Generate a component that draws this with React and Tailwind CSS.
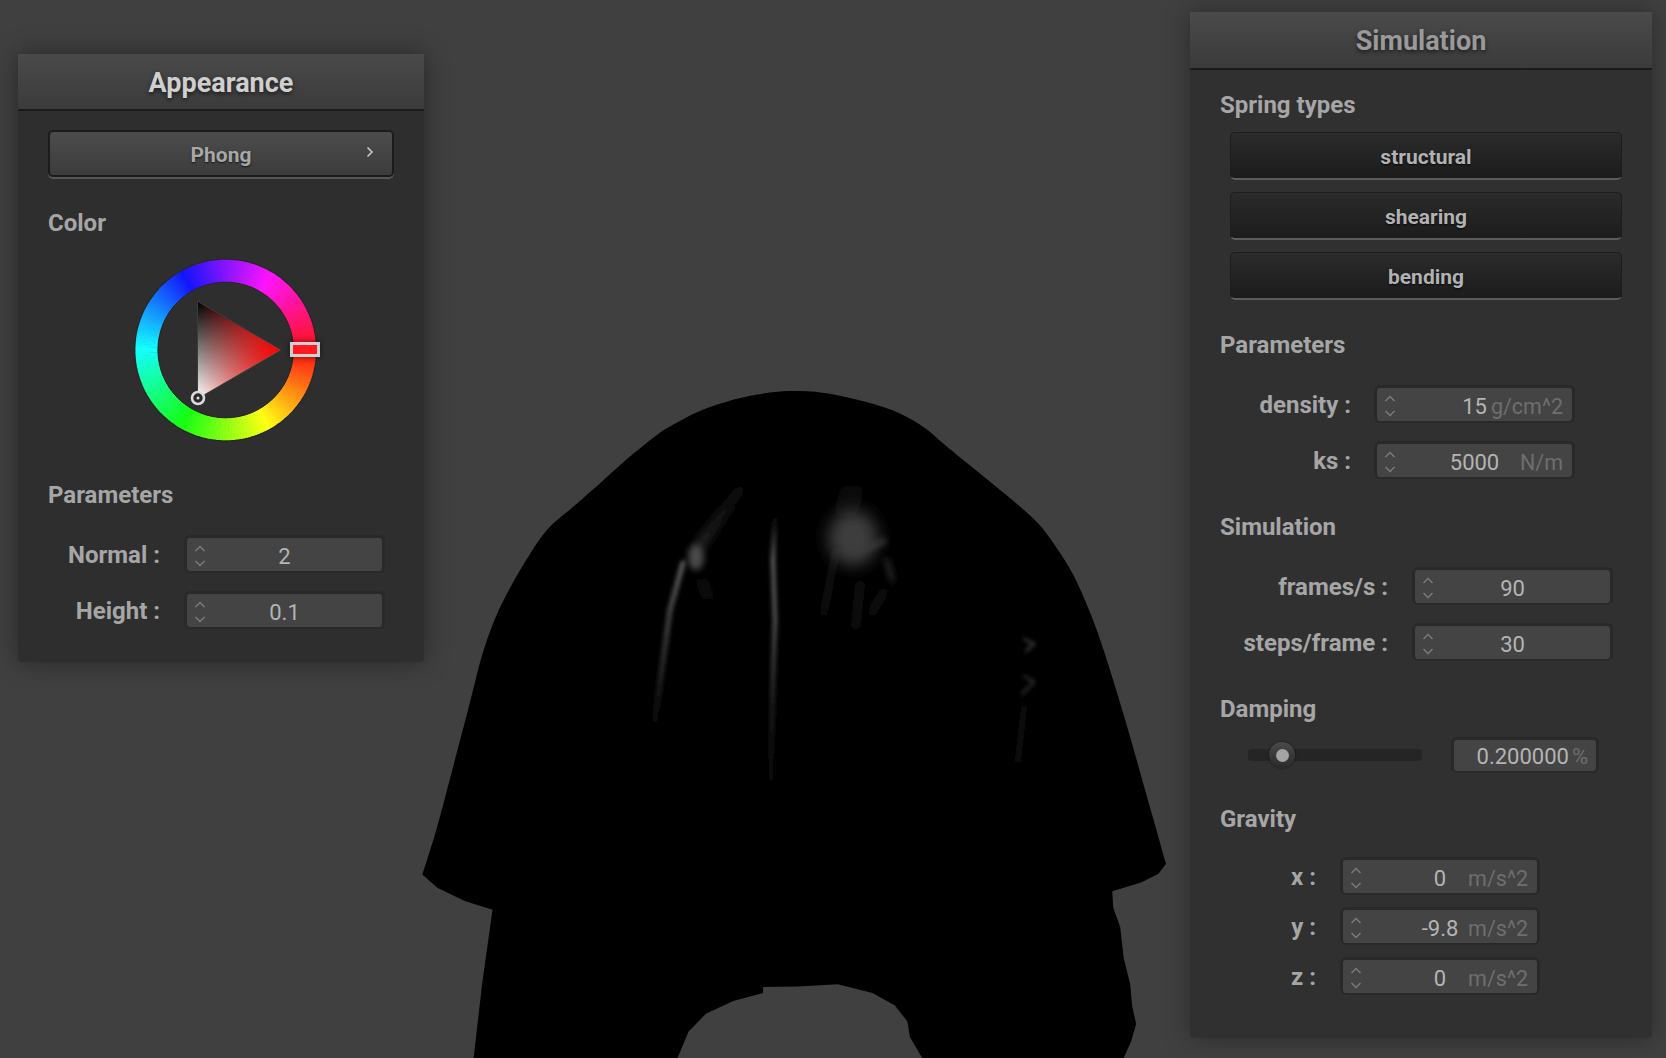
import React from 'react';

const hues = Array.from({ length: 180 }, (_, i) => i * 2);

const polar = (cx, cy, r, deg) => {
  const a = (deg * Math.PI) / 180;
  return `${(cx + r * Math.cos(a)).toFixed(2)} ${(cy + r * Math.sin(a)).toFixed(2)}`;
};

// catmull-rom through the points, used for the cloth outline
const smooth = (pts) => {
  let d = `M${pts[0][0]} ${pts[0][1]}`;
  for (let i = 0; i < pts.length - 1; i++) {
    const p0 = pts[i - 1] || pts[i];
    const p1 = pts[i];
    const p2 = pts[i + 1];
    const p3 = pts[i + 2] || p2;
    d += `C${p1[0] + (p2[0] - p0[0]) / 6} ${p1[1] + (p2[1] - p0[1]) / 6} ${p2[0] - (p3[0] - p1[0]) / 6} ${p2[1] - (p3[1] - p1[1]) / 6} ${p2[0]} ${p2[1]}`;
  }
  return d;
};

const dome = [
  [45, 1150], [75, 1040], [110, 890], [140, 760], [165, 650], [190, 570], [215, 510], [250, 440], [295, 365],
  [350, 310], [410, 250], [470, 190], [520, 145], [560, 118], [610, 90], [680, 65], [740, 52], [790, 48],
  [850, 52], [920, 68], [990, 92], [1050, 128], [1090, 165], [1130, 203], [1190, 258], [1240, 305], [1285, 352],
  [1320, 405], [1355, 470], [1390, 560], [1415, 640], [1440, 730], [1465, 825], [1490, 925], [1515, 1025], [1540, 1125],
];

const hem =
  'L1525 1148L1490 1168L1432 1188L1434 1225L1448 1270L1455 1340L1468 1400L1472 1450L1480 1490L1470 1530L1455 1568L1050 1568L1025 1520L1020 1485L995 1448L950 1420L880 1400L800 1405L730 1406L730 1420L670 1438L615 1467L580 1508L558 1568L148 1568L165 1400L186 1230L130 1210L75 1180Z';

// hue wheel + saturation triangle
const ColorWheel = () => (
  <svg width="200" height="200" viewBox="126 250 200 200" className="block overflow-visible">
    <defs>
      <linearGradient id="triV" gradientUnits="userSpaceOnUse" x1="198" y1="302" x2="198" y2="398">
        <stop offset="0" stopColor="#000" />
        <stop offset="1" stopColor="#fff" />
      </linearGradient>
      <linearGradient id="triH" gradientUnits="userSpaceOnUse" x1="198" y1="350" x2="280" y2="350">
        <stop offset="0" stopColor="#ff0000" stopOpacity="0" />
        <stop offset="1" stopColor="#ff0000" stopOpacity="1" />
      </linearGradient>
      <filter id="handleBlur" filterUnits="userSpaceOnUse" x="270" y="320" width="70" height="60">
        <feGaussianBlur stdDeviation="3" />
      </filter>
    </defs>
    <circle cx="225.7" cy="350" r="91.500" fill="#262626" />
    {hues.map((h) => (
      <path
        key={h}
        d={`M${polar(225.7, 350, 79, h - 0.2)}A79 79 0 0 1 ${polar(225.7, 350, 79, h + 2.2)}`}
        stroke={`hsl(${h} 100% 54%)`}
        strokeWidth="22.500"
        fill="none"
      />
    ))}
    <circle cx="225.7" cy="350" r="67.800" fill="#2e2e2e" stroke="#262626" strokeWidth="1" />
    <polygon points="198,302 280,350 198,398" fill="none" stroke="#3c3c3c" strokeWidth="2" />
    <polygon points="198,302 280,350 198,398" fill="url(#triV)" />
    <polygon points="198,302 280,350 198,398" fill="url(#triH)" />
    <rect x="290" y="342" width="30" height="15" fill="#000" opacity="0.55" filter="url(#handleBlur)" />
    <rect x="291.500" y="343.500" width="27" height="12" fill="#ff1a22" stroke="#d0d0d0" strokeWidth="3" />
    <circle cx="198" cy="398" r="6" fill="#2a2a2a" stroke="#dcdcdc" strokeWidth="2.600" />
    <circle cx="198" cy="398" r="1.500" fill="#ddd" />
  </svg>
);

const Spinner = () => (
  <svg width="12" height="22" viewBox="0 0 12 22" fill="none" stroke="#7c7c7c" strokeWidth="1.400" className="block">
    <path d="M1.500 6 6 1.500 10.500 6" />
    <path d="M1.500 16 6 20.500 10.500 16" />
  </svg>
);

const Heading = ({ className = '', children }) => (
  <div className={`h-8 text-[24px] leading-8 font-bold text-[#a6a6a6] ${className}`}>{children}</div>
);

const NumberBox = ({ value, unit, className = '' }) => (
  <div className={`grid h-[38px] grid-cols-[1fr_auto_1fr] items-center rounded-[6px] border-[3px] border-b-2 border-[#292929] bg-[#444444] text-[22px] ${className}`}>
    <div className="pl-[7px]">
      <Spinner />
    </div>
    <div className="pt-[2px] text-[#b4b4b4]">{value}</div>
    <div className="pt-[3px] pr-[9px] text-right text-[21.5px] text-[#6e6e6e]">{unit}</div>
  </div>
);

const Label = ({ className = '', children }) => (
  <div className={`pt-[2px] text-right text-[24px] leading-8 font-bold text-[#a6a6a6] ${className}`}>{children}</div>
);

const SpringButton = ({ children }) => (
  <div className="flex h-12 w-[392px] items-center justify-center rounded-[5px] border border-b-2 border-[#1d1d1d] border-b-[#5c5c5c] bg-gradient-to-b from-[#2b2b2b] to-[#1c1c1c] pt-[4px] text-[21px] font-bold text-[#b2b2b2] [text-shadow:0_1px_2px_rgba(0,0,0,0.8)]">
    {children}
  </div>
);

const PanelHeader = ({ title, className = '' }) => (
  <div className={`flex items-center justify-center border-b-2 border-[#1b1b1b] bg-gradient-to-b from-[#4a4a4a] to-[#3b3b3b] pt-[3px] text-[27px] font-bold [text-shadow:0_2px_4px_rgba(0,0,0,0.6)] ${className}`}>
    {title}
  </div>
);

// the rendered cloth, in screen pixels (outline traced on a 1568 grid)
const Cloth = () => (
  <svg width="780" height="688" viewBox="400 370 780 688" className="absolute top-[370px] left-[400px]">
    <defs>
      <filter id="b2" filterUnits="userSpaceOnUse" x="400" y="370" width="780" height="688"><feGaussianBlur stdDeviation="2" /></filter>
      <filter id="b3" filterUnits="userSpaceOnUse" x="400" y="370" width="780" height="688"><feGaussianBlur stdDeviation="3" /></filter>
      <filter id="b5" filterUnits="userSpaceOnUse" x="400" y="370" width="780" height="688"><feGaussianBlur stdDeviation="5" /></filter>
      <filter id="b8" filterUnits="userSpaceOnUse" x="400" y="370" width="780" height="688"><feGaussianBlur stdDeviation="8" /></filter>
      <linearGradient id="fadeL" gradientUnits="userSpaceOnUse" x1="0" y1="560" x2="0" y2="740">
        <stop offset="0" stopColor="#606060" />
        <stop offset="0.4" stopColor="#3c3c3c" />
        <stop offset="1" stopColor="#000" />
      </linearGradient>
      <linearGradient id="fadeC" gradientUnits="userSpaceOnUse" x1="0" y1="515" x2="0" y2="810">
        <stop offset="0" stopColor="#000" />
        <stop offset="0.15" stopColor="#646464" />
        <stop offset="0.35" stopColor="#5a5a5a" />
        <stop offset="0.65" stopColor="#222" />
        <stop offset="1" stopColor="#000" />
      </linearGradient>
      <linearGradient id="fadeU" gradientUnits="userSpaceOnUse" x1="0" y1="475" x2="0" y2="555">
        <stop offset="0" stopColor="#000" />
        <stop offset="1" stopColor="#2c2c2c" />
      </linearGradient>
    </defs>
    <g transform="translate(400 370) scale(0.4974 0.4388)">
      <path fill="#000" d={`${smooth(dome)}${hem}`} />
    </g>
    <g fill="none" strokeLinecap="round">
      <path d="M683 563L670 610L655 720" stroke="url(#fadeL)" strokeWidth="5" filter="url(#b2)" />
      <path d="M700 545L727 507L752 473" stroke="url(#fadeU)" strokeWidth="10" filter="url(#b5)" />
      <path d="M775 515L773 560L775 620L773 680L770 810" stroke="url(#fadeC)" strokeWidth="4" filter="url(#b2)" />
      <path d="M702 582L708 596" stroke="#141414" strokeWidth="7" filter="url(#b5)" />
      <path d="M858 552L884 541" stroke="#3c3c3c" strokeWidth="5" filter="url(#b3)" />
      <path d="M852 492L846 510" stroke="#121212" strokeWidth="14" filter="url(#b8)" />
      <path d="M836 550L824 612" stroke="#0a0a0a" strokeWidth="9" filter="url(#b5)" />
      <path d="M887 560L892 580" stroke="#262626" strokeWidth="5" filter="url(#b3)" />
      <path d="M860 585L856 625" stroke="#0e0e0e" strokeWidth="10" filter="url(#b5)" />
      <path d="M884 592L872 612" stroke="#0a0a0a" strokeWidth="10" filter="url(#b5)" />
      <path d="M1024 639L1034 644L1026 651" stroke="#3c3c3c" strokeWidth="2.500" filter="url(#b2)" />
      <path d="M1024 676L1034 682L1022 694" stroke="#303030" strokeWidth="2.500" filter="url(#b2)" />
      <path d="M1024 708L1022 725L1018 760" stroke="#101010" strokeWidth="6" filter="url(#b3)" />
    </g>
    <ellipse cx="696" cy="557" rx="8" ry="13" fill="#484848" filter="url(#b3)" />
    <ellipse cx="853" cy="538" rx="25" ry="28" fill="#3e3e3e" filter="url(#b8)" />
  </svg>
);

export default function App() {
  return (
    <div className="relative h-[1058px] w-[1666px] overflow-hidden bg-[#404040] font-['Roboto',sans-serif]">
      <Cloth />

      {/* Appearance window */}
      <div className="absolute top-[54px] left-[18px] h-[608px] w-[406px] rounded-b-[4px] bg-[#2e2e2e] shadow-[0_0_26px_rgba(0,0,0,0.4)]">
        <PanelHeader title="Appearance" className="h-[57px] text-[#cfcfcf]" />
        <div className="pl-[30px]">
          <div className="relative mt-[19px] flex h-[47px] w-[346px] items-center justify-center rounded-[5px] border-2 border-[#1c1c1c] bg-gradient-to-b from-[#4c4c4c] to-[#3c3c3c] pt-[4px] text-[21px] font-bold text-[#a8a8a8] shadow-[0_2px_0_#555] [text-shadow:0_1px_2px_rgba(0,0,0,0.7)]">
            Phong
            <svg width="8" height="12" viewBox="0 0 8 12" fill="none" stroke="#c4c4c4" strokeWidth="1.700" className="absolute top-[14px] right-[18px]">
              <path d="M1.500 1.500 6 6 1.500 10.500" />
            </svg>
          </div>
          <Heading className="mt-[30px]">Color</Heading>
          <div className="mt-[11px] ml-[78px] h-[200px]">
            <ColorWheel />
          </div>
          <Heading className="mt-[29px]">Parameters</Heading>
          <div className="mt-[24px] flex flex-col gap-[18px]">
            <div className="flex items-center gap-[24px]">
              <Label className="w-[112px]">Normal :</Label>
              <NumberBox value="2" className="w-[201px]" />
            </div>
            <div className="flex items-center gap-[24px]">
              <Label className="w-[112px]">Height :</Label>
              <NumberBox value="0.1" className="w-[201px]" />
            </div>
          </div>
        </div>
      </div>

      {/* Simulation window */}
      <div className="absolute top-[12px] left-[1190px] h-[1026px] w-[462px] rounded-b-[4px] bg-[#303030] shadow-[0_0_26px_rgba(0,0,0,0.35)]">
        <PanelHeader title="Simulation" className="h-[58px] text-[#9a9a9a]" />
        <div className="pl-[30px]">
          <Heading className="mt-[19px]">Spring types</Heading>
          <div className="mt-[11px] ml-[10px] flex flex-col gap-3">
            <SpringButton>structural</SpringButton>
            <SpringButton>shearing</SpringButton>
            <SpringButton>bending</SpringButton>
          </div>

          <Heading className="mt-[29px]">Parameters</Heading>
          <div className="mt-[24px] flex flex-col gap-[18px]">
            <div className="flex items-center gap-[23px]">
              <Label className="w-[131px]">density :</Label>
              <NumberBox value="15" unit="g/cm^2" className="w-[201px]" />
            </div>
            <div className="flex items-center gap-[23px]">
              <Label className="w-[131px]">ks :</Label>
              <NumberBox value="5000" unit="N/m" className="w-[201px]" />
            </div>
          </div>

          <Heading className="mt-[32px]">Simulation</Heading>
          <div className="mt-[24px] flex flex-col gap-[18px]">
            <div className="flex items-center gap-[24px]">
              <Label className="w-[168px]">frames/s :</Label>
              <NumberBox value="90" className="w-[201px]" />
            </div>
            <div className="flex items-center gap-[24px]">
              <Label className="w-[168px]">steps/frame :</Label>
              <NumberBox value="30" className="w-[201px]" />
            </div>
          </div>

          <Heading className="mt-[32px]">Damping</Heading>
          <div className="mt-[12px] ml-[28px] flex items-center gap-[29px]">
            <div className="relative h-3 w-[174px] rounded-[4px] bg-[#252525]">
              <div className="absolute top-[-7px] left-[21px] flex h-[26px] w-[26px] items-center justify-center rounded-full bg-gradient-to-b from-[#4a4a4a] to-[#2a2a2a] shadow-[0_0_2px_#111]">
                <div className="h-[13px] w-[13px] rounded-full bg-[#a4a4a4]" />
              </div>
            </div>
            <div className="flex h-9 w-[148px] items-center justify-end gap-[3px] rounded-[6px] border-[3px] border-b-2 border-[#292929] bg-[#444444] pt-[1px] pr-[8px] text-[22px]">
              <span className="text-[#b4b4b4]">0.200000</span>
              <span className="text-[#6e6e6e]">%</span>
            </div>
          </div>

          <Heading className="mt-[30px]">Gravity</Heading>
          <div className="mt-[22px] flex flex-col gap-3">
            <div className="flex items-center gap-[24px]">
              <Label className="w-[96px]">x :</Label>
              <NumberBox value="0" unit="m/s^2" className="w-[200px]" />
            </div>
            <div className="flex items-center gap-[24px]">
              <Label className="w-[96px]">y :</Label>
              <NumberBox value="-9.8" unit="m/s^2" className="w-[200px]" />
            </div>
            <div className="flex items-center gap-[24px]">
              <Label className="w-[96px]">z :</Label>
              <NumberBox value="0" unit="m/s^2" className="w-[200px]" />
            </div>
          </div>
        </div>
      </div>
    </div>
  );
}
